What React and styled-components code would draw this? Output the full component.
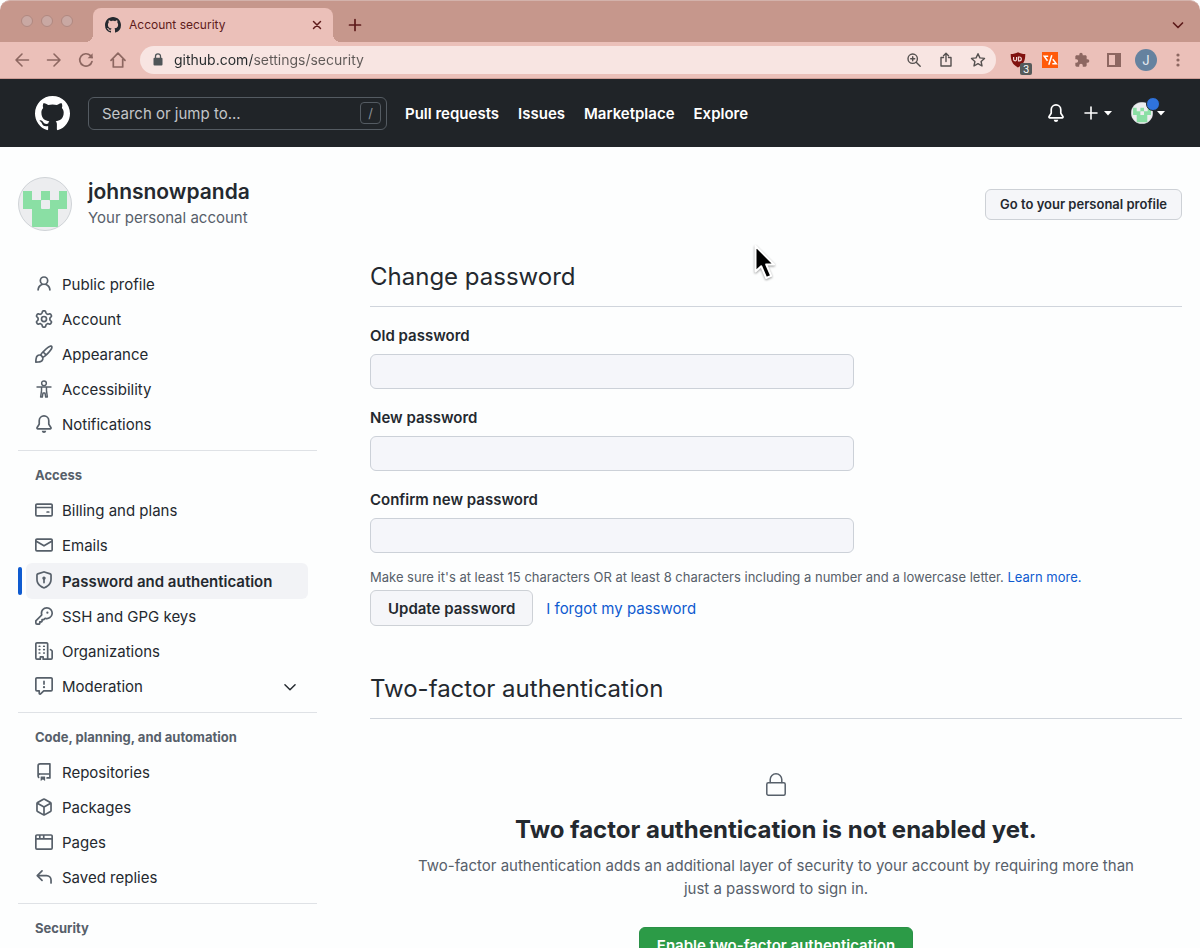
import React from "react";
import styled, { createGlobalStyle } from "styled-components";

const GlobalStyle = createGlobalStyle`
  *, *::before, *::after { box-sizing: border-box; }
  body { margin: 0; background: #fdfefe; }
  body, button, input { font-family: Inter, "Liberation Sans", sans-serif; }
  h1, h2, h3, p, ul { margin: 0; padding: 0; }
  ul { list-style: none; }
  button { cursor: pointer; }
`;

const ink = "#24292f";
const muted = "#57606a";
const blue = "#0f5bd0";

/* ---------- icons ---------- */

const Svg = styled.svg`
  display: block;
  flex: none;
  width: ${(p) => p.$size}px;
  height: ${(p) => p.$size}px;
`;

const paths = {
  github:
    "M8 0c4.42 0 8 3.58 8 8a8.013 8.013 0 0 1-5.45 7.59c-.4.08-.55-.17-.55-.38 0-.27.01-1.13.01-2.2 0-.75-.25-1.23-.54-1.48 1.78-.2 3.65-.88 3.65-3.95 0-.88-.31-1.59-.82-2.15.08-.2.36-1.02-.08-2.12 0 0-.67-.22-2.2.82-.64-.18-1.32-.27-2-.27-.68 0-1.36.09-2 .27-1.53-1.03-2.2-.82-2.2-.82-.44 1.1-.16 1.92-.08 2.12-.51.56-.82 1.28-.82 2.15 0 3.06 1.86 3.75 3.64 3.95-.23.2-.44.55-.51 1.07-.46.21-1.61.55-2.33-.66-.15-.24-.6-.83-1.23-.82-.67.01-.27.38.01.53.34.19.73.9.82 1.13.16.45.68 1.31 2.69.94 0 .67.01 1.3.01 1.49 0 .21-.15.45-.55.38A7.995 7.995 0 0 1 0 8c0-4.42 3.58-8 8-8Z",
  person:
    "M10.561 8.073a6.005 6.005 0 0 1 3.432 5.142.75.75 0 1 1-1.498.07 4.5 4.5 0 0 0-8.99 0 .75.75 0 0 1-1.498-.07 6.004 6.004 0 0 1 3.431-5.142 3.999 3.999 0 1 1 5.123 0ZM10.5 5a2.5 2.5 0 1 0-5 0 2.5 2.5 0 0 0 5 0Z",
  gear:
    "M8 0a8.2 8.2 0 0 1 .701.031C9.444.095 9.99.645 10.16 1.29l.288 1.107c.018.066.079.158.212.224.231.114.454.243.668.386.123.082.233.09.299.071l1.103-.303c.644-.176 1.392.021 1.82.63.27.385.506.792.704 1.218.315.675.111 1.422-.364 1.891l-.814.806c-.049.048-.098.147-.088.294.016.257.016.515 0 .772-.01.147.038.246.088.294l.814.806c.475.469.679 1.216.364 1.891a7.977 7.977 0 0 1-.704 1.217c-.428.61-1.176.807-1.82.63l-1.102-.302c-.067-.019-.177-.011-.3.071a5.909 5.909 0 0 1-.668.386c-.133.066-.194.158-.211.224l-.29 1.106c-.168.646-.715 1.196-1.458 1.26a8.006 8.006 0 0 1-1.402 0c-.743-.064-1.289-.614-1.458-1.26l-.289-1.106c-.018-.066-.079-.158-.212-.224a5.738 5.738 0 0 1-.668-.386c-.123-.082-.233-.09-.299-.071l-1.103.303c-.644.176-1.392-.021-1.82-.63a8.12 8.12 0 0 1-.704-1.218c-.315-.675-.111-1.422.363-1.891l.815-.806c.05-.048.098-.147.088-.294a6.214 6.214 0 0 1 0-.772c.01-.147-.038-.246-.088-.294l-.815-.806C.635 6.045.431 5.298.746 4.623a7.92 7.92 0 0 1 .704-1.217c.428-.61 1.176-.807 1.82-.63l1.102.302c.067.019.177.011.3-.071.214-.143.437-.272.668-.386.133-.066.194-.158.211-.224l.29-1.106C6.009.645 6.556.095 7.299.03 7.53.01 7.764 0 8 0Zm-.571 1.525c-.036.003-.108.036-.137.146l-.289 1.105c-.147.561-.549.967-.998 1.189-.173.086-.34.183-.5.29-.417.278-.97.423-1.529.27l-1.103-.303c-.109-.03-.175.016-.195.045-.22.312-.412.644-.573.99-.014.031-.021.11.059.19l.815.806c.411.406.562.957.53 1.456a4.709 4.709 0 0 0 0 .582c.032.499-.119 1.05-.53 1.456l-.815.806c-.081.08-.073.159-.059.19.162.346.353.677.573.989.02.03.085.076.195.046l1.102-.303c.56-.153 1.113-.008 1.53.27.161.107.328.204.501.29.447.222.85.629.997 1.189l.289 1.105c.029.109.101.143.137.146a6.6 6.6 0 0 0 1.142 0c.036-.003.108-.036.137-.146l.289-1.105c.147-.561.549-.967.998-1.189.173-.086.34-.183.5-.29.417-.278.97-.423 1.529-.27l1.103.303c.109.029.175-.016.195-.045.22-.313.411-.644.573-.99.014-.031.021-.11-.059-.19l-.815-.806c-.411-.406-.562-.957-.53-1.456a4.709 4.709 0 0 0 0-.582c-.032-.499.119-1.05.53-1.456l.815-.806c.081-.08.073-.159.059-.19a6.464 6.464 0 0 0-.573-.989c-.02-.03-.085-.076-.195-.046l-1.102.303c-.56.153-1.113.008-1.53-.27a4.44 4.44 0 0 0-.501-.29c-.447-.222-.85-.629-.997-1.189l-.289-1.105c-.029-.11-.101-.143-.137-.146a6.6 6.6 0 0 0-1.142 0ZM11 8a3 3 0 1 1-6 0 3 3 0 0 1 6 0ZM9.5 8a1.5 1.5 0 1 0-3.001.001A1.5 1.5 0 0 0 9.5 8Z",
  paintbrush:
    "M11.134 1.535c.7-.509 1.416-.942 2.076-1.155.649-.21 1.463-.267 2.069.34.603.601.568 1.411.368 2.07-.202.668-.624 1.39-1.125 2.096-1.011 1.424-2.496 2.987-3.775 4.249-1.098 1.084-2.132 1.839-3.04 2.3a3.744 3.744 0 0 1-1.055 3.217c-.431.431-1.065.691-1.657.861-.614.177-1.294.287-1.914.357A21.151 21.151 0 0 1 .797 16H.743a.75.75 0 0 1-.743-.742v-.055a21.25 21.25 0 0 1 .13-2.284c.067-.647.187-1.287.358-1.914.17-.591.43-1.226.86-1.657a3.746 3.746 0 0 1 3.227-1.054c.466-.893 1.225-1.907 2.314-2.982 1.271-1.255 2.833-2.75 4.245-3.777ZM1.62 13.089c-.051.464-.086.929-.104 1.395.466-.018.932-.053 1.396-.104a10.511 10.511 0 0 0 1.668-.309c.526-.151.856-.325 1.011-.48a2.25 2.25 0 1 0-3.182-3.182c-.155.155-.329.485-.48 1.01a10.515 10.515 0 0 0-.309 1.67Zm10.396-10.34c-1.224.89-2.605 2.189-3.822 3.384l1.718 1.718c1.21-1.205 2.51-2.597 3.387-3.833.47-.662.78-1.227.912-1.662.134-.444.032-.551.009-.575h-.001V1.78c-.014-.014-.113-.113-.548.027-.432.14-.995.462-1.655.942Zm-4.832 7.266-.001.001a9.859 9.859 0 0 0 1.63-1.142L7.155 7.216a9.7 9.7 0 0 0-1.161 1.607c.482.302.889.71 1.19 1.192Z",
  bell:
    "M8 16a2 2 0 0 0 1.985-1.75c.017-.137-.097-.25-.235-.25h-3.5c-.138 0-.252.113-.235.25A2 2 0 0 0 8 16ZM3 5a5 5 0 0 1 10 0v2.947c0 .05.015.098.042.139l1.703 2.555A1.519 1.519 0 0 1 13.482 13H2.518a1.516 1.516 0 0 1-1.263-2.36l1.703-2.554A.255.255 0 0 0 3 7.947Zm5-3.5A3.5 3.5 0 0 0 4.5 5v2.947c0 .346-.102.683-.294.97l-1.703 2.556a.017.017 0 0 0-.003.01l.001.006.004.006.006.004.007.001h10.964l.007-.001.006-.004.004-.006.001-.007a.017.017 0 0 0-.003-.01l-1.703-2.554a1.745 1.745 0 0 1-.294-.97V5A3.5 3.5 0 0 0 8 1.5Z",
  card:
    "M10.75 9a.75.75 0 0 0 0 1.5h1.5a.75.75 0 0 0 0-1.5h-1.5ZM0 3.75C0 2.784.784 2 1.75 2h12.5c.966 0 1.75.784 1.75 1.75v8.5A1.75 1.75 0 0 1 14.25 14H1.75A1.75 1.75 0 0 1 0 12.25ZM14.5 6.5h-13v5.75c0 .138.112.25.25.25h12.5a.25.25 0 0 0 .25-.25Zm0-2.75a.25.25 0 0 0-.25-.25H1.75a.25.25 0 0 0-.25.25V5h13Z",
  mail:
    "M1.75 2h12.5c.966 0 1.75.784 1.75 1.75v8.5A1.75 1.75 0 0 1 14.25 14H1.75A1.75 1.75 0 0 1 0 12.25v-8.5C0 2.784.784 2 1.75 2ZM1.5 12.251c0 .138.112.25.25.25h12.5a.25.25 0 0 0 .25-.25V5.809L8.38 9.397a.75.75 0 0 1-.76 0L1.5 5.809v6.442Zm13-8.181v-.32a.25.25 0 0 0-.25-.25H1.75a.25.25 0 0 0-.25.25v.32L8 7.88Z",
  shield:
    "m8.533.133 5.25 1.68A1.75 1.75 0 0 1 15 3.48V7c0 1.566-.32 3.182-1.303 4.682-.983 1.498-2.585 2.813-5.032 3.855a1.697 1.697 0 0 1-1.33 0c-2.447-1.042-4.049-2.357-5.032-3.855C1.32 10.182 1 8.566 1 7V3.48a1.75 1.75 0 0 1 1.217-1.667l5.25-1.68a1.748 1.748 0 0 1 1.066 0Zm-.61 1.429.001.001-5.25 1.68a.251.251 0 0 0-.174.237V7c0 1.36.275 2.666 1.057 3.859.784 1.194 2.121 2.342 4.366 3.298a.196.196 0 0 0 .154 0c2.245-.957 3.582-2.103 4.366-3.297C13.225 9.666 13.5 8.358 13.5 7V3.48a.25.25 0 0 0-.174-.238l-5.25-1.68a.25.25 0 0 0-.153 0ZM9.5 6.5c0 .536-.286 1.032-.75 1.3v2.45a.75.75 0 0 1-1.5 0V7.8A1.5 1.5 0 1 1 9.5 6.5Z",
  key:
    "M10.5 0a5.499 5.499 0 1 1-1.288 10.848l-.932.932a.749.749 0 0 1-.53.22H7v.75a.749.749 0 0 1-.22.53l-.5.5a.749.749 0 0 1-.53.22H5v.75a.749.749 0 0 1-.22.53l-.5.5a.749.749 0 0 1-.53.22h-2A1.75 1.75 0 0 1 0 14.25v-2c0-.199.079-.389.22-.53l4.932-4.932A5.5 5.5 0 0 1 10.5 0Zm-4 5.5c-.001.431.069.86.205 1.269a.75.75 0 0 1-.181.768L1.5 12.56v1.69c0 .138.112.25.25.25h1.69l.06-.06v-1.19a.75.75 0 0 1 .75-.75h1.19l.06-.06v-1.19a.75.75 0 0 1 .75-.75h1.19l1.023-1.025a.75.75 0 0 1 .768-.18A4 4 0 1 0 6.5 5.5ZM11 6a1 1 0 1 1 0-2 1 1 0 0 1 0 2Z",
  organization:
    "M1.75 16A1.75 1.75 0 0 1 0 14.25V1.75C0 .784.784 0 1.75 0h8.5C11.216 0 12 .784 12 1.75v12.5c0 .085-.006.168-.018.25h2.268a.25.25 0 0 0 .25-.25V8.285a.25.25 0 0 0-.111-.208l-1.055-.703a.749.749 0 1 1 .832-1.248l1.055.703c.487.325.779.871.779 1.456v5.965A1.75 1.75 0 0 1 14.25 16h-3.5a.766.766 0 0 1-.197-.026c-.099.017-.2.026-.303.026h-3a.75.75 0 0 1-.75-.75V14h-1v1.25a.75.75 0 0 1-.75.75Zm-.25-1.75c0 .138.112.25.25.25H4v-1.25a.75.75 0 0 1 .75-.75h2.5a.75.75 0 0 1 .75.75v1.25h2.25a.25.25 0 0 0 .25-.25V1.75a.25.25 0 0 0-.25-.25h-8.5a.25.25 0 0 0-.25.25ZM3.75 6h.5a.75.75 0 0 1 0 1.5h-.5a.75.75 0 0 1 0-1.5ZM3 3.75A.75.75 0 0 1 3.75 3h.5a.75.75 0 0 1 0 1.5h-.5A.75.75 0 0 1 3 3.75Zm4 3A.75.75 0 0 1 7.75 6h.5a.75.75 0 0 1 0 1.5h-.5A.75.75 0 0 1 7 6.75ZM7.75 3h.5a.75.75 0 0 1 0 1.5h-.5a.75.75 0 0 1 0-1.5ZM3 9.75A.75.75 0 0 1 3.75 9h.5a.75.75 0 0 1 0 1.5h-.5A.75.75 0 0 1 3 9.75ZM7.75 9h.5a.75.75 0 0 1 0 1.5h-.5a.75.75 0 0 1 0-1.5Z",
  report:
    "M0 1.75C0 .784.784 0 1.75 0h12.5C15.216 0 16 .784 16 1.75v9.5A1.75 1.75 0 0 1 14.25 13H8.06l-2.573 2.573A1.458 1.458 0 0 1 3 14.543V13H1.75A1.75 1.75 0 0 1 0 11.25Zm1.75-.25a.25.25 0 0 0-.25.25v9.5c0 .138.112.25.25.25h2a.75.75 0 0 1 .75.75v2.19l2.72-2.72a.749.749 0 0 1 .53-.22h6.5a.25.25 0 0 0 .25-.25v-9.5a.25.25 0 0 0-.25-.25Zm7 2.25v2.5a.75.75 0 0 1-1.5 0v-2.5a.75.75 0 0 1 1.5 0ZM9 9a1 1 0 1 1-2 0 1 1 0 0 1 2 0Z",
  repo:
    "M2 2.5A2.5 2.5 0 0 1 4.5 0h8.75a.75.75 0 0 1 .75.75v12.5a.75.75 0 0 1-.75.75h-2.5a.75.75 0 0 1 0-1.5h1.75v-2h-8a1 1 0 0 0-.714 1.7.75.75 0 1 1-1.072 1.05A2.495 2.495 0 0 1 2 11.5Zm10.5-1h-8a1 1 0 0 0-1 1v6.708A2.486 2.486 0 0 1 4.5 9h8ZM5 12.25a.25.25 0 0 1 .25-.25h3.5a.25.25 0 0 1 .25.25v3.25a.25.25 0 0 1-.4.2l-1.45-1.087a.249.249 0 0 0-.3 0L5.4 15.7a.25.25 0 0 1-.4-.2Z",
  package:
    "m8.878.392 5.25 3.045c.54.314.872.89.872 1.514v6.098a1.75 1.75 0 0 1-.872 1.514l-5.25 3.045a1.75 1.75 0 0 1-1.756 0l-5.25-3.045A1.75 1.75 0 0 1 1 11.049V4.951c0-.624.332-1.201.872-1.514L7.122.392a1.75 1.75 0 0 1 1.756 0ZM7.875 1.69l-4.63 2.685L8 7.133l4.755-2.758-4.63-2.685a.248.248 0 0 0-.25 0ZM2.5 5.677v5.372c0 .09.047.171.125.216l4.625 2.683V8.432Zm6.25 8.271 4.625-2.683a.25.25 0 0 0 .125-.216V5.677L8.75 8.432Z",
  browser:
    "M0 2.75C0 1.784.784 1 1.75 1h12.5c.966 0 1.75.784 1.75 1.75v10.5A1.75 1.75 0 0 1 14.25 15H1.75A1.75 1.75 0 0 1 0 13.25ZM14.5 6h-13v7.25c0 .138.112.25.25.25h12.5a.25.25 0 0 0 .25-.25Zm-6-3.5v2h6V2.75a.25.25 0 0 0-.25-.25ZM5 2.5v2h2v-2Zm-3.25 0a.25.25 0 0 0-.25.25V4.5h2v-2Z",
  reply:
    "M6.78 1.97a.75.75 0 0 1 0 1.06L3.81 6h6.44A4.75 4.75 0 0 1 15 10.75v2.5a.75.75 0 0 1-1.5 0v-2.5a3.25 3.25 0 0 0-3.25-3.25H3.81l2.97 2.97a.749.749 0 0 1-.326 1.275.749.749 0 0 1-.734-.215L1.47 7.28a.75.75 0 0 1 0-1.06l4.25-4.25a.75.75 0 0 1 1.06 0Z",
};

const Octicon = ({ name, size = 18 }) => (
  <Svg $size={size} viewBox="0 0 16 16" fill="currentColor" aria-hidden="true">
    <path fillRule="evenodd" d={paths[name]} />
  </Svg>
);

const Stroke = ({ size = 16, box = 16, width = 1.5, children }) => (
  <Svg
    $size={size}
    viewBox={`0 0 ${box} ${box}`}
    fill="none"
    stroke="currentColor"
    strokeWidth={width}
    strokeLinecap="round"
    strokeLinejoin="round"
    aria-hidden="true"
  >
    {children}
  </Svg>
);

const AccessibilityIcon = () => (
  <Stroke size={18} width={1.3}>
    <circle cx="8" cy="2.9" r="2.1" />
    <path d="M1.8 6.2h12.4M5.8 6.4v3L5 15.2h1.5l.6-3.7h1.8l.6 3.7H11l-.8-5.8v-3" />
  </Stroke>
);

const ChevronDown = ({ size, width }) => (
  <Stroke size={size} width={width}>
    <path d="M3.5 6 8 10.5 12.5 6" />
  </Stroke>
);

const Caret = () => (
  <Svg $size={10} viewBox="0 0 10 10" fill="currentColor" aria-hidden="true">
    <path d="M1 3h8L5 7.4z" />
  </Svg>
);

const LockOutline = () => (
  <Stroke size={26} box={26} width={1.5}>
    <rect x="3.8" y="10.8" width="18.4" height="12.4" rx="1.5" />
    <path d="M7.2 10.5V7.600a5.800 5.800 0 0 1 11.600 0v2.900" />
  </Stroke>
);

const Identicon = ({ size }) => (
  <Svg $size={size} viewBox="0 0 54 54" aria-hidden="true">
    <defs>
      <clipPath id={`round${size}`}>
        <circle cx="27" cy="27" r="26.5" />
      </clipPath>
    </defs>
    <circle cx="27" cy="27" r="26.5" fill="#ecedef" />
    <g clipPath={`url(#round${size})`} fill="#8adfa4">
      <path d="M5 14h9v9h9v-9h9v9h9v-9h8v18h-9v18H14V32H5z" />
    </g>
    <rect x="23" y="23" width="9" height="9" rx="1" fill="#ecedef" />
    <circle cx="27" cy="27" r="26.5" fill="none" stroke="#cfd3d7" />
  </Svg>
);

/* ---------- browser chrome ---------- */

const Window = styled.div`
  height: 100vh;
  display: flex;
  flex-direction: column;
  overflow: hidden;
`;

const TabStrip = styled.div`
  display: flex;
  align-items: flex-end;
  height: 42px;
  flex: none;
  background: #c6978c;
  border-top: 1px solid #d3b2ab;
  border-radius: 10px 10px 0 0;
`;

const Lights = styled.div`
  display: flex;
  gap: 8px;
  padding: 0 20px 15px 21px;
`;

const Light = styled.span`
  width: 12px;
  height: 12px;
  border-radius: 50%;
  background: #c9a8a3;
  border: 1px solid #b08880;
`;

const Tab = styled.div`
  position: relative;
  display: flex;
  align-items: center;
  gap: 8px;
  width: 240px;
  height: 34px;
  padding: 0 8px 0 12px;
  border-radius: 8px 8px 0 0;
  background: #ebc0b9;
  color: #5e1b1b;
  font-size: 12px;

  &::before,
  &::after {
    content: "";
    position: absolute;
    bottom: 0;
    width: 8px;
    height: 8px;
  }
  &::before {
    right: 100%;
    background: radial-gradient(circle at 0 0, transparent 8px, #ebc0b9 8px);
  }
  &::after {
    left: 100%;
    background: radial-gradient(circle at 100% 0, transparent 8px, #ebc0b9 8px);
  }
`;

const TabMark = styled.span`
  color: #24292f;
`;

const TabTitle = styled.span`
  flex: 1;
  padding-bottom: 2px;
`;

const IconButton = styled.button`
  position: relative;
  display: flex;
  align-items: center;
  justify-content: center;
  width: ${(p) => p.$width || 32}px;
  height: ${(p) => p.$height || 34}px;
  padding: 0;
  border: 0;
  background: none;
  color: ${(p) => p.$color || "#8d6761"};
`;

const Spacer = styled.span`
  flex: 1;
`;

const Toolbar = styled.div`
  display: flex;
  align-items: center;
  flex: none;
  height: 37px;
  padding: 0 6px;
  background: #ebc0b9;
  border-bottom: 1px solid #cc9d96;
`;

const Omnibox = styled.form`
  display: flex;
  align-items: center;
  flex: 1;
  height: 28px;
  margin: 0 6px;
  padding: 0 2px 0 10px;
  border-radius: 14px;
  background: #f8e5e2;
  color: #55504f;
`;

const Address = styled.input`
  flex: 1;
  min-width: 0;
  padding: 0 0 2px;
  margin-left: 8px;
  border: 0;
  outline: 0;
  font-size: 14px;
  background: linear-gradient(90deg, #24292b 78px, #5f5957 78px);
  background-clip: text;
  -webkit-background-clip: text;
  color: transparent;
`;

const CountBadge = styled.span`
  position: absolute;
  right: 2px;
  bottom: 2px;
  width: 12px;
  border-radius: 2px;
  background: #555a5a;
  color: #fff;
  font-size: 10px;
  line-height: 12px;
  text-align: center;
`;

const ProfileDot = styled.span`
  width: 22px;
  height: 22px;
  border-radius: 50%;
  background: #65829f;
  color: #e8eef4;
  font-size: 13px;
  line-height: 22px;
`;

const BrowserChrome = () => (
  <header>
    <TabStrip>
      <Lights>
        <Light />
        <Light />
        <Light />
      </Lights>
      <Tab>
        <TabMark>
          <Octicon name="github" size={16} />
        </TabMark>
        <TabTitle>Account security</TabTitle>
        <IconButton $width={16} $color="#5e1b1b" aria-label="Close tab">
          <Stroke size={14} width={1.7}>
            <path d="M4 4l8 8M12 4l-8 8" />
          </Stroke>
        </IconButton>
      </Tab>
      <IconButton $width={44} $color="#5e1b1b" aria-label="New tab">
        <Stroke size={16} width={1.7}>
          <path d="M8 2.5v11M2.5 8h11" />
        </Stroke>
      </IconButton>
      <Spacer />
      <IconButton $width={44} $color="#5e1b1b" aria-label="Search tabs">
        <ChevronDown size={16} width={1.7} />
      </IconButton>
    </TabStrip>
    <Toolbar>
      <IconButton aria-label="Back">
        <Stroke width={1.6}>
          <path d="M14.5 8H2M8 2 2 8l6 6" />
        </Stroke>
      </IconButton>
      <IconButton aria-label="Forward">
        <Stroke width={1.6}>
          <path d="M1.5 8H14M8 2l6 6-6 6" />
        </Stroke>
      </IconButton>
      <IconButton aria-label="Reload">
        <Stroke width={1.7}>
          <path d="M14 9.5A6.2 6.2 0 1 1 12.5 3.7L14 5.5" />
          <path d="M14.6 1.2v5H9.600z" fill="currentColor" stroke="none" />
        </Stroke>
      </IconButton>
      <IconButton aria-label="Home">
        <Stroke width={1.7}>
          <path d="M1 8.3 8 1.2l7 7.1M3.3 7v8h9.400V7" />
        </Stroke>
      </IconButton>
      <Omnibox onSubmit={(e) => e.preventDefault()}>
        <Svg $size={16} viewBox="0 0 16 16" aria-hidden="true">
          <rect x="3.5" y="5.8" width="9" height="7.700" rx="1" fill="#4f5558" />
          <path d="M5.5 6V4.300a2.500 2.500 0 0 1 5 0V6" fill="none" stroke="#4f5558" strokeWidth="1.3" />
        </Svg>
        <Address aria-label="Address" defaultValue="github.com/settings/security" />
        <IconButton type="button" $height={28} $color="#55504f" aria-label="Zoom">
          <Stroke width={1.4}>
            <circle cx="6.7" cy="6.7" r="4.7" />
            <path d="M10.2 10.2l4 4M6.7 4.7v4M4.700 6.700h4" />
          </Stroke>
        </IconButton>
        <IconButton type="button" $height={28} $color="#55504f" aria-label="Share">
          <Stroke width={1.4}>
            <path d="M5.5 5.500H3V14h10V5.500h-2.500M8 9.500V1.500M5.500 3.700 8 1.200l2.500 2.500" />
          </Stroke>
        </IconButton>
        <IconButton type="button" $height={28} $color="#55504f" aria-label="Bookmark">
          <Stroke width={1.4}>
            <path d="M8 1.700l1.900 4.200 4.600.5-3.400 3.100.9 4.500L8 11.700 4 14l.9-4.500L1.500 6.400l4.600-.5z" />
          </Stroke>
        </IconButton>
      </Omnibox>
      <IconButton aria-label="Content blocker">
        <Svg $size={16} viewBox="0 0 16 16" aria-hidden="true">
          <path d="M8 .2c2.200 1.200 4.300 1.700 7.300 1.800 0 6.800-1.600 10.300-7.300 13.600C2.300 12.300.7 8.800.7 2 3.700 1.900 5.800 1.400 8 .2z" fill="#80120f" />
          <path d="M3.600 5v2.300a1.500 1.500 0 0 0 3 0V5M8.500 5v3.800h.9a1.900 1.900 0 0 0 0-3.800z" fill="none" stroke="#f2d7d5" strokeWidth="1.200" />
        </Svg>
        <CountBadge>3</CountBadge>
      </IconButton>
      <IconButton aria-label="Code extension">
        <Svg $size={16} viewBox="0 0 16 16" aria-hidden="true">
          <path d="M0 0h16v16H0z" fill="#ff5a0a" />
          <path d="M6.200 4.200H2.200L5.500 8.800M9.800 3.200 6.800 12.800M10.800 7.200l3.500 4.600h-4" fill="none" stroke="#fff" strokeWidth="1.500" />
        </Svg>
      </IconButton>
      <IconButton aria-label="Extensions">
        <Svg $size={16} viewBox="0 0 24 24" fill="currentColor" aria-hidden="true">
          <path d="M20.500 11H19V7c0-1.100-.9-2-2-2h-4V3.500a2.500 2.500 0 0 0-5 0V5H4c-1.100 0-2 .9-2 2v3.800h1.500a2.700 2.700 0 0 1 0 5.400H2V20c0 1.100.9 2 2 2h3.800v-1.500a2.700 2.700 0 0 1 5.400 0V22H17c1.100 0 2-.9 2-2v-4h1.500a2.500 2.500 0 0 0 0-5z" />
        </Svg>
      </IconButton>
      <IconButton aria-label="Side panel">
        <Svg $size={16} viewBox="0 0 16 16" fill="currentColor" fillRule="evenodd" aria-hidden="true">
          <path d="M1 1h14v14H1zM3 3v10h6V3z" />
        </Svg>
      </IconButton>
      <IconButton aria-label="Browser profile">
        <ProfileDot>J</ProfileDot>
      </IconButton>
      <IconButton aria-label="Browser menu">
        <Svg $size={16} viewBox="0 0 16 16" fill="currentColor" aria-hidden="true">
          <circle cx="8" cy="3" r="1.600" />
          <circle cx="8" cy="8" r="1.600" />
          <circle cx="8" cy="13" r="1.600" />
        </Svg>
      </IconButton>
    </Toolbar>
  </header>
);

/* ---------- site header ---------- */

const SiteHeader = styled.header`
  display: flex;
  align-items: center;
  flex: none;
  height: 68px;
  padding: 0 34px 0 35px;
  background: #202428;
  color: #fff;
`;

const HomeLink = styled.a`
  color: #fff;
`;

const Search = styled.label`
  display: flex;
  align-items: center;
  width: 299px;
  height: 33px;
  margin: 0 18px;
  padding: 0 5px 0 13px;
  border: 1px solid #545b62;
  border-radius: 6px;
`;

const SearchInput = styled.input`
  flex: 1;
  min-width: 0;
  padding: 0;
  border: 0;
  outline: 0;
  background: none;
  color: #fff;
  font-size: 15px;
  &::placeholder {
    color: #c3c6c9;
    opacity: 1;
  }
`;

const SlashKey = styled.kbd`
  width: 21px;
  border: 1px solid #545b62;
  border-radius: 4px;
  color: #8b9096;
  font-family: inherit;
  font-size: 13px;
  line-height: 20px;
  text-align: center;
`;

const TopNav = styled.nav`
  display: flex;
  flex: 1;
  gap: 19px;
`;

const TopLink = styled.a`
  color: #fff;
  font-size: 15px;
  font-weight: 600;
  text-decoration: none;
`;

const Actions = styled.div`
  display: flex;
  align-items: center;
  gap: 18px;
`;

const HeaderButton = styled.button`
  position: relative;
  display: flex;
  align-items: center;
  gap: ${(p) => p.$gap || 0}px;
  padding: 0;
  border: 0;
  background: none;
  color: #fff;
`;

const UnreadDot = styled.span`
  position: absolute;
  top: -5px;
  left: 15px;
  width: 14px;
  height: 14px;
  border: 1px solid #202428;
  border-radius: 50%;
  background: #2f73dd;
`;

/* ---------- settings page ---------- */

const Page = styled.div`
  flex: 1;
  min-height: 0;
  overflow: hidden;
  padding: 30px 18px 0;
  color: ${ink};
`;

const Profile = styled.div`
  display: flex;
  align-items: center;
  gap: 16px;
  margin-bottom: 27px;
`;

const ProfileText = styled.div`
  flex: 1;
`;

const ProfileName = styled.h1`
  font-size: 21px;
  font-weight: 600;
  line-height: 28px;
`;

const ProfileNote = styled.p`
  color: ${muted};
  font-size: 15px;
  line-height: 24px;
`;

const Button = styled.button`
  height: ${(p) => (p.$small ? 31 : 36)}px;
  padding: 0 ${(p) => (p.$small ? 14 : 17)}px;
  border: 1px solid ${(p) => (p.$primary ? "#2a9147" : "#cdd1d6")};
  border-radius: 6px;
  background: ${(p) => (p.$primary ? "#2c9b47" : "#f5f6f9")};
  color: ${(p) => (p.$primary ? "#fff" : ink)};
  font-size: ${(p) => (p.$small ? 13 : 15)}px;
  font-weight: 600;
`;

const Columns = styled.div`
  display: flex;
  gap: 53px;
`;

const Sidebar = styled.nav`
  flex: none;
  width: 299px;
  padding-top: 9px;
`;

const NavGroup = styled.section`
  & + & {
    margin-top: 8px;
    padding-top: 7px;
    border-top: 1px solid #dfe2e6;
  }
`;

const GroupTitle = styled.h2`
  padding-left: 17px;
  color: ${muted};
  font-size: 13px;
  font-weight: 700;
  line-height: 35px;
`;

const NavItem = styled.li`
  position: relative;
  padding: 0 9px 0 8px;

  ${(p) =>
    p.$current &&
    `&::before {
      content: "";
      position: absolute;
      top: 4px;
      bottom: 4px;
      left: 0;
      width: 4px;
      border-radius: 2px;
      background: ${blue};
    }`}
`;

const NavLink = styled.a`
  display: flex;
  align-items: center;
  gap: 9px;
  height: ${(p) => (p.$current ? 36 : 35)}px;
  padding: 0 9px;
  border-radius: 6px;
  background: ${(p) => (p.$current ? "#f2f3f6" : "transparent")};
  color: ${ink};
  font-size: 15px;
  font-weight: ${(p) => (p.$current ? 600 : 400)};
  text-decoration: none;
`;

const NavIcon = styled.span`
  padding-bottom: 2px;
  color: ${muted};
`;

const NavLabel = styled.span`
  flex: 1;
`;

const Main = styled.main`
  flex: 1;
  min-width: 0;
`;

const SectionTitle = styled.h2`
  padding-bottom: 10px;
  border-bottom: 1px solid #d0d5dc;
  font-size: 24px;
  font-weight: 400;
  line-height: 38px;
`;

const Field = styled.div`
  display: flex;
  flex-direction: column;
  gap: 7px;
  max-width: 484px;
  margin-top: 17px;
`;

const FieldLabel = styled.label`
  font-size: 15px;
  font-weight: 600;
  line-height: 23px;
`;

const PasswordInput = styled.input`
  height: 35px;
  padding: 0 12px;
  border: 1px solid #ccd1d8;
  border-radius: 6px;
  background: #f5f6fa;
  font-size: 15px;
`;

const Hint = styled.p`
  margin: 14px 0 3px;
  color: ${muted};
  font-size: 13px;
  line-height: 20px;
`;

const TextLink = styled.a`
  color: ${blue};
  text-decoration: none;
`;

const FormActions = styled.div`
  display: flex;
  align-items: center;
  gap: 13px;
  margin-bottom: 44px;
  font-size: 15px;
`;

const Blankslate = styled.div`
  display: flex;
  flex-direction: column;
  align-items: center;
  padding: 53px 35px;
  text-align: center;
  color: ${muted};
`;

const BlankTitle = styled.h3`
  margin: 13px 0 5px;
  color: ${ink};
  font-size: 24px;
  font-weight: 700;
  line-height: 38px;
`;

const BlankText = styled.p`
  margin-bottom: 27px;
  font-size: 15px;
  line-height: 23px;
`;

const Pointer = styled.svg`
  position: absolute;
  top: 243px;
  left: 751px;
  width: 30px;
  height: 40px;
  filter: drop-shadow(0 1px 1px rgba(0, 0, 0, 0.4));
  pointer-events: none;
`;

const groups = [
  {
    items: [
      { icon: "person", label: "Public profile" },
      { icon: "gear", label: "Account" },
      { icon: "paintbrush", label: "Appearance" },
      { icon: "accessibility", label: "Accessibility" },
      { icon: "bell", label: "Notifications" },
    ],
  },
  {
    title: "Access",
    items: [
      { icon: "card", label: "Billing and plans" },
      { icon: "mail", label: "Emails" },
      { icon: "shield", label: "Password and authentication", current: true },
      { icon: "key", label: "SSH and GPG keys" },
      { icon: "organization", label: "Organizations" },
      { icon: "report", label: "Moderation", expandable: true },
    ],
  },
  {
    title: "Code, planning, and automation",
    items: [
      { icon: "repo", label: "Repositories" },
      { icon: "package", label: "Packages" },
      { icon: "browser", label: "Pages" },
      { icon: "reply", label: "Saved replies" },
    ],
  },
  { title: "Security", items: [] },
];

const fields = [
  { id: "old-password", label: "Old password" },
  { id: "new-password", label: "New password" },
  { id: "confirm-password", label: "Confirm new password" },
];

export default function App() {
  return (
    <Window>
      <GlobalStyle />
      <BrowserChrome />
      <SiteHeader>
        <HomeLink href="#" aria-label="Homepage">
          <Octicon name="github" size={35} />
        </HomeLink>
        <Search>
          <SearchInput type="search" aria-label="Search" placeholder="Search or jump to..." />
          <SlashKey>/</SlashKey>
        </Search>
        <TopNav>
          {["Pull requests", "Issues", "Marketplace", "Explore"].map((label) => (
            <TopLink href="#" key={label}>
              {label}
            </TopLink>
          ))}
        </TopNav>
        <Actions>
          <HeaderButton aria-label="Notifications">
            <Octicon name="bell" size={18} />
          </HeaderButton>
          <HeaderButton $gap={4} aria-label="Create new">
            <Stroke size={16} width={1.6}>
              <path d="M8 2v12M2 8h12" />
            </Stroke>
            <Caret />
          </HeaderButton>
          <HeaderButton $gap={3} aria-label="Your account">
            <Identicon size={22} />
            <UnreadDot />
            <Caret />
          </HeaderButton>
        </Actions>
      </SiteHeader>

      <Page>
        <Profile>
          <Identicon size={54} />
          <ProfileText>
            <ProfileName>johnsnowpanda</ProfileName>
            <ProfileNote>Your personal account</ProfileNote>
          </ProfileText>
          <Button $small>Go to your personal profile</Button>
        </Profile>

        <Columns>
          <Sidebar aria-label="Settings">
            {groups.map((group, index) => (
              <NavGroup key={group.title || index}>
                {group.title && <GroupTitle>{group.title}</GroupTitle>}
                <ul>
                  {group.items.map((item) => (
                    <NavItem key={item.label} $current={item.current}>
                      <NavLink
                        href="#"
                        $current={item.current}
                        aria-current={item.current ? "page" : undefined}
                      >
                        <NavIcon>
                          {item.icon === "accessibility" ? (
                            <AccessibilityIcon />
                          ) : (
                            <Octicon name={item.icon} />
                          )}
                        </NavIcon>
                        <NavLabel>{item.label}</NavLabel>
                        {item.expandable && <ChevronDown size={18} width={1.3} />}
                      </NavLink>
                    </NavItem>
                  ))}
                </ul>
              </NavGroup>
            ))}
          </Sidebar>

          <Main>
            <SectionTitle>Change password</SectionTitle>
            <form onSubmit={(e) => e.preventDefault()}>
              {fields.map((field) => (
                <Field key={field.id}>
                  <FieldLabel htmlFor={field.id}>{field.label}</FieldLabel>
                  <PasswordInput id={field.id} type="password" />
                </Field>
              ))}
              <Hint>
                Make sure it's at least 15 characters OR at least 8 characters including a number
                and a lowercase letter. <TextLink href="#">Learn more.</TextLink>
              </Hint>
              <FormActions>
                <Button type="submit">Update password</Button>
                <TextLink href="#">I forgot my password</TextLink>
              </FormActions>
            </form>

            <SectionTitle>Two-factor authentication</SectionTitle>
            <Blankslate>
              <LockOutline />
              <BlankTitle>Two factor authentication is not enabled yet.</BlankTitle>
              <BlankText>
                Two-factor authentication adds an additional layer of security to your account by
                requiring more than just a password to sign in.
              </BlankText>
              <Button $primary>Enable two-factor authentication</Button>
            </Blankslate>
          </Main>
        </Columns>
      </Page>

      <Pointer viewBox="0 0 30 40" aria-hidden="true">
        <path
          d="M4.500 3v25.500l5.700-5.300 5 11.800 5-2.200-5-11.300h7.800z"
          fill="#000"
          stroke="#fff"
          strokeWidth="2"
          strokeLinejoin="round"
        />
      </Pointer>
    </Window>
  );
}
